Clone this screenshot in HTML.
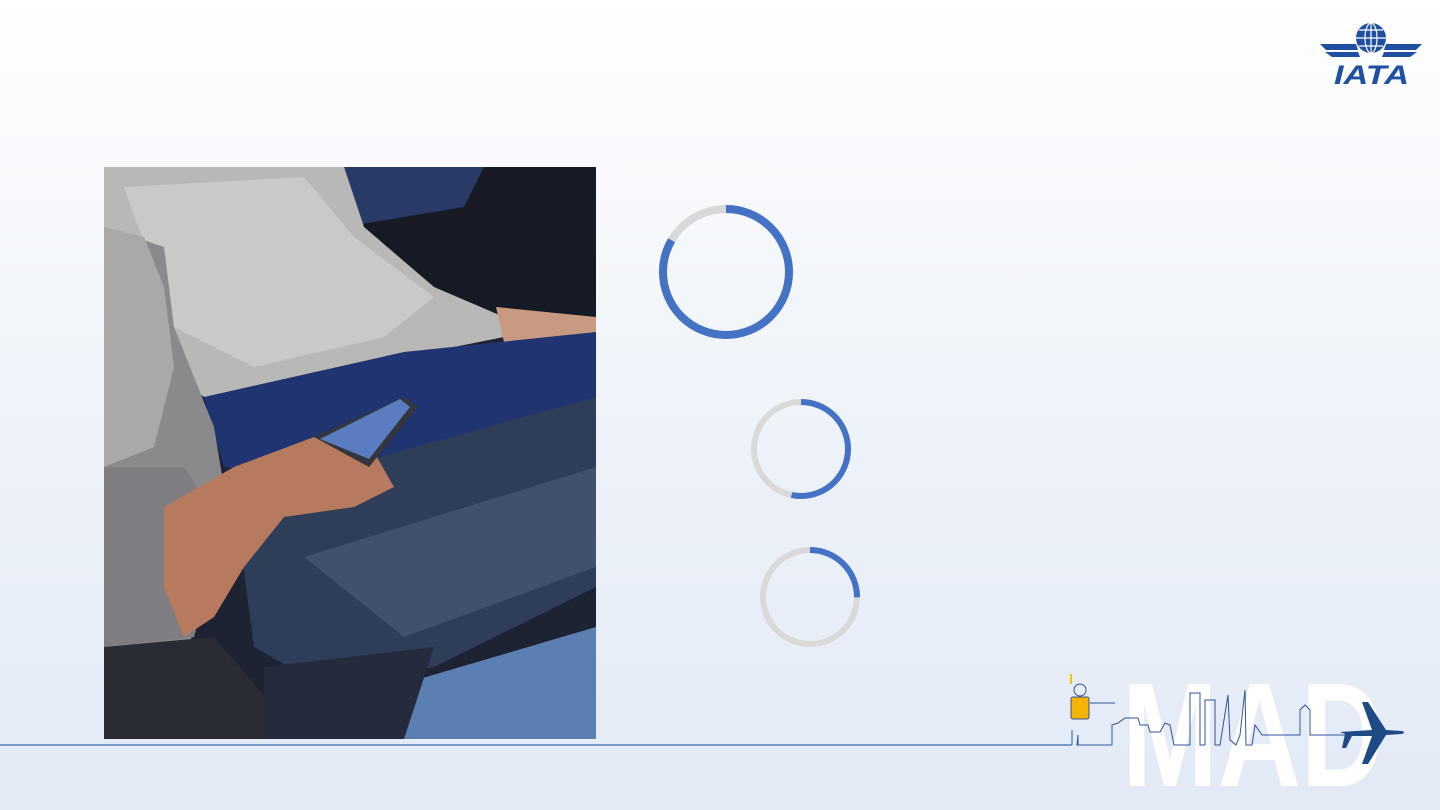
<!DOCTYPE html>
<html><head><meta charset="utf-8"><style>
html,body{margin:0;padding:0}
body{width:1440px;height:810px;overflow:hidden;position:relative;background:linear-gradient(180deg,#ffffff 0%,#f3f6fb 35%,#e2eaf6 100%);font-family:"Liberation Sans",sans-serif}
.photo{position:absolute;left:104px;top:167px;width:492px;height:572px;overflow:hidden;background:#1c2230}
</style></head><body>
<div class="photo">
<svg width="492" height="572" viewBox="0 0 492 572">
<rect width="492" height="572" fill="#1d2333"/>
<rect x="230" y="0" width="262" height="150" fill="#161a24"/>
<path d="M230 0 L380 0 L360 40 L240 60 Z" fill="#2a3a66"/>
<path d="M0 0 L240 0 L260 60 L330 120 L400 150 L400 170 L300 190 L200 210 L100 230 L60 200 L0 180 Z" fill="#b8b8b6"/>
<path d="M20 20 L200 10 L250 70 L330 130 L280 170 L150 200 L70 160 Z" fill="#c9c9c7"/>
<path d="M392 140 L492 150 L492 175 L400 175 Z" fill="#c99a82"/>
<path d="M100 230 L300 185 L492 165 L492 240 L350 290 L200 310 L120 300 Z" fill="#1f3470"/>
<path d="M130 330 L492 230 L492 420 L330 500 L220 520 L150 480 Z" fill="#2e3d58"/>
<path d="M200 390 L492 300 L492 400 L300 470 Z" fill="#41506c"/>
<path d="M0 60 L60 80 L70 160 L110 260 L120 320 L100 420 L80 500 L0 510 Z" fill="#8a8a8c"/>
<path d="M0 60 L40 70 L60 120 L70 200 L50 280 L0 300 Z" fill="#a9a9aa"/>
<path d="M0 300 L80 300 L120 360 L90 470 L0 480 Z" fill="#7e7e82"/>
<path d="M60 340 L130 300 L210 270 L270 285 L290 320 L250 340 L180 350 L140 400 L110 450 L80 470 L60 420 Z" fill="#b77a5e"/>
<path d="M210 270 L300 230 L314 240 L265 300 Z" fill="#33363c"/>
<path d="M216 272 L296 232 L306 240 L265 292 Z" fill="#5a7cc0"/>
<path d="M0 480 L110 470 L170 540 L180 572 L0 572 Z" fill="#2a2c33"/>
<path d="M220 540 L492 460 L492 572 L220 572 Z" fill="#5b7fb0"/>
<path d="M160 500 L330 480 L300 572 L160 572 Z" fill="#252b3c"/>
</svg>
</div>
<div style="position:absolute;left:0;top:744px;width:1072px;height:2px;background:#7d9ccb"></div>
<svg style="position:absolute;left:0;top:0" width="1440" height="810">
<circle cx="726" cy="272" r="63" fill="none" stroke="#d9d9d9" stroke-width="8"/>
<circle cx="726" cy="272" r="63" fill="none" stroke="#4472c4" stroke-width="8" stroke-dasharray="330 396" transform="rotate(-90 726 272)"/>
<circle cx="801" cy="449" r="47" fill="none" stroke="#d9d9d9" stroke-width="6"/>
<circle cx="801" cy="449" r="47" fill="none" stroke="#4472c4" stroke-width="6" stroke-dasharray="157 296" transform="rotate(-90 801 449)"/>
<circle cx="810" cy="597" r="47" fill="none" stroke="#d9d9d9" stroke-width="6"/>
<circle cx="810" cy="597" r="47" fill="none" stroke="#4472c4" stroke-width="6" stroke-dasharray="74 296" transform="rotate(-90 810 597)"/>
<text x="1122" y="786" font-family="Liberation Sans" font-weight="bold" font-size="148" fill="#ffffff" textLength="262" lengthAdjust="spacingAndGlyphs">MAD</text>
<g fill="none" stroke="#2f5597" stroke-width="1">
<path d="M1072 745 L1072 730 M1078 745 L1078 735 L1077 745 L1112 745 L1112 725 L1118 723 L1125 718 L1138 718 L1140 725 L1148 725 L1150 732 L1160 732 L1165 723 L1170 725 L1174 745 L1190 745 L1190 693 L1200 693 L1200 745 L1205 745 L1205 700 L1215 700 L1215 745 L1220 745 L1228 695 L1230 740 L1236 745 L1240 735 L1245 690 L1246 745 L1252 745 L1255 725 L1262 735 L1300 735 L1300 710 L1305 705 L1310 710 L1310 735 L1350 735"/>
</g>
<rect x="1071" y="697" width="18" height="22" rx="2" fill="#f4b400" stroke="#2f5597"/>
<circle cx="1080" cy="690" r="6" fill="none" stroke="#2f5597"/>
<line x1="1071" y1="674" x2="1071" y2="684" stroke="#f4c400" stroke-width="2"/>
<line x1="1090" y1="703" x2="1115" y2="703" stroke="#2f5597"/>
<path d="M1340 732 L1372 730 L1362 702 L1368 702 L1386 730 L1402 731 Q1406 732 1402 734 L1386 735 L1368 764 L1362 764 L1372 736 L1352 736 L1346 748 L1342 748 L1345 734 Z" fill="#1e4a85"/>
<g fill="#1e4fa0">
<circle cx="1371" cy="38" r="15"/>
<path d="M1320 44 L1356 44 L1358 50 L1326 50 Z M1325 52 L1358 52 L1360 57 L1332 57 Z M1422 44 L1386 44 L1384 50 L1416 50 Z M1417 52 L1384 52 L1382 57 L1410 57 Z"/>
<text x="1334" y="84" font-family="Liberation Sans" font-weight="bold" font-style="italic" font-size="27" textLength="75" lengthAdjust="spacingAndGlyphs">IATA</text>
</g>
<g fill="none" stroke="#fff" stroke-width="1.2">
<ellipse cx="1371" cy="38" rx="6" ry="15"/>
<line x1="1371" y1="23" x2="1371" y2="53"/>
<line x1="1356" y1="38" x2="1386" y2="38"/>
<path d="M1359 30 L1383 30 M1359 46 L1383 46"/>
</g>
</svg>
</body></html>
